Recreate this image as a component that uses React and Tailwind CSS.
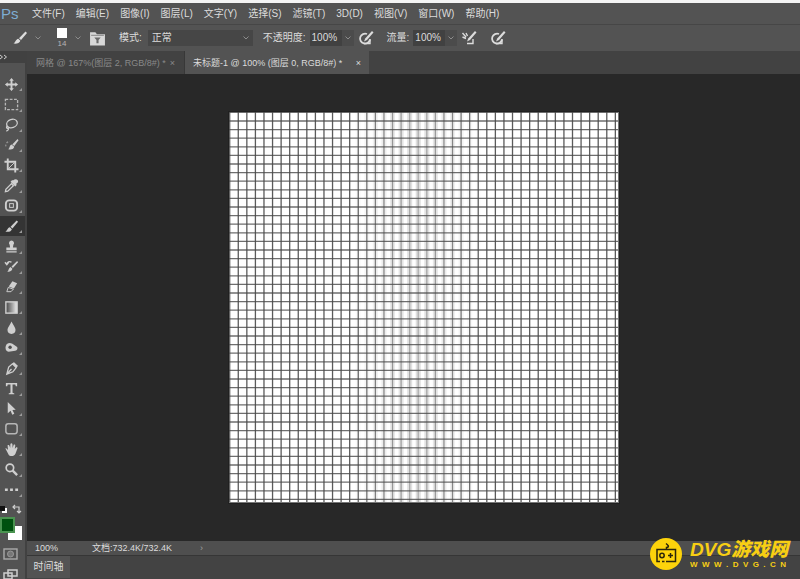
import React from 'react';

const MENUS = ['文件(F)', '编辑(E)', '图像(I)', '图层(L)', '文字(Y)', '选择(S)', '滤镜(T)', '3D(D)', '视图(V)', '窗口(W)', '帮助(H)'];

const line = { fill: 'none', stroke: 'currentColor', strokeWidth: 1.4 };

const brush = (
  <>
    <path d="M13.5 1.5 L15 3 L9 10 L7 8.2 Z" fill="currentColor" />
    <path d="M6.3 8.8 L8.4 10.8 C7.5 13.5 4.5 14 1.5 13.6 C3.5 12.6 3.5 9.5 6.3 8.8 Z" fill="currentColor" />
  </>
);

const TOOLS = [
  ['移动工具', <path d="M8 1 L10.5 4 H9 V7 H12 V5.5 L15 8 L12 10.5 V9 H9 V12 H10.5 L8 15 L5.5 12 H7 V9 H4 V10.5 L1 8 L4 5.5 V7 H7 V4 H5.5 Z" fill="currentColor" />],
  ['矩形选框工具', <rect x="1.5" y="2.5" width="13" height="11" {...line} strokeDasharray="3 1.6" opacity="0.8" />],
  ['套索工具', <><ellipse cx="8.5" cy="7" rx="5.8" ry="4.4" transform="rotate(-20 8.5 7)" {...line} /><path d="M4 10 C2 10 2.5 12.5 4.5 12 C5.5 13 4 14.5 2.5 15" {...line} /></>],
  ['快速选择工具', <><path d="M14.5 2 L15.5 3.5 L11 9.5 L8.8 8 Z" fill="currentColor" /><path d="M8 8 L11 10.5 C10 14 6.5 13.5 4.5 13 C6.5 12 5.5 9 8 8 Z" fill="currentColor" /><path d="M2 10 A4 4 0 0 1 6 5" {...line} strokeDasharray="2 1.5" opacity="0.5" /></>],
  ['裁剪工具', <><path d="M4 0.5 V12 H15.5 M0.5 4 H12 V15.5" {...line} strokeWidth="2" /><path d="M5 11 L11 5" {...line} strokeWidth="1" /></>],
  ['吸管工具', <><path d="M10 2.5 C12 0 15.5 1.5 15 4 C14.8 5 13.5 5.8 13 6.2 L13.5 7.5 L12 9 L7 4 L8.5 2.5 Z" fill="currentColor" /><path d="M8 6 L10 8.2 L4 14 L1.5 14.5 L2 12 Z" {...line} /></>],
  ['修补工具', <><rect x="2" y="2.5" width="12" height="11" rx="3.5" {...line} strokeWidth="2" /><rect x="6" y="6" width="4" height="4" {...line} strokeWidth="1" /></>],
  ['画笔工具', brush],
  ['仿制图章工具', <path d="M8 1.5 A2.7 2.7 0 0 1 10 6 L9.5 9 H13.5 V12 H2.5 V9 H6.5 L6 6 A2.7 2.7 0 0 1 8 1.5 Z M2.5 13 H13.5 V14.4 H2.5 Z" fill="currentColor" />],
  ['历史记录画笔工具', <><path d="M14 2 L15 3.4 L9.5 9.5 L8 8 Z M7 8.5 L9 10.5 C8 13.6 5.5 14 3.5 13.5 C5.2 12.5 4.8 9.5 7 8.5 Z" fill="currentColor" /><path d="M1 3.5 L3 6 L5 3.5 M3 6 C3 3 6 2 8 3.5" {...line} /></>],
  ['橡皮擦工具', <><path d="M9 2.5 L14 4.5 L10.5 10 L5 8 Z" fill="currentColor" /><path d="M4.5 9 L10 10.8 L7.5 13.5 H3 Z" {...line} strokeWidth="1" /></>],
  ['渐变工具', (
    <>
      <linearGradient id="tool-gradient"><stop offset="0" stopColor="#444" /><stop offset="1" stopColor="#eee" /></linearGradient>
      <rect x="2" y="2" width="12" height="12" fill="url(#tool-gradient)" stroke="currentColor" strokeWidth="1.5" />
    </>
  )],
  ['模糊工具', <path d="M8 1.5 C9.5 5 12.3 7.5 12.3 10.5 A4.3 4.3 0 0 1 3.7 10.5 C3.7 7.5 6.8 5 8 1.5 Z" fill="currentColor" />],
  ['减淡工具', <><path d="M2 6 C3 3 6 2.5 9 4 L14 7.5 C15 9 14 11 12 11.5 L5 12.5 C2 12 1 9 2 6 Z" fill="currentColor" /><circle cx="6.5" cy="7.7" r="1.8" fill="#4d4d4d" /></>],
  ['钢笔工具', <><path d="M9 3 L13 7 L9.5 11.5 L3 14 L5 6.5 Z M3 14 L8 8.5" {...line} /><path d="M10.5 1 L15 5.3 L13 7 L9 3 Z" fill="currentColor" /></>],
  ['文字工具', <path d="M2 2 H14 V5.5 H12.6 L12 3.8 H9.1 V12.6 L11 13.2 V14.2 H5 V13.2 L6.9 12.6 V3.8 H4 L3.4 5.5 H2 Z" fill="currentColor" />],
  ['路径选择工具', <path d="M4 1 L12.5 9.2 L9 9.6 L11 13.6 L8.8 14.6 L7 10.5 L4 13 Z" fill="currentColor" />],
  ['矩形工具', <rect x="2" y="3" width="12" height="10.5" rx="2.5" {...line} strokeWidth="1.6" opacity="0.8" />],
  ['抓手工具', <path d="M1.5 6.8 C2.5 6 3.6 7.5 4.3 8.6 L3.8 3.7 C4.5 2.7 5.7 3.2 5.9 4.3 L6.6 6.5 L6.8 2 C7.5 1 8.8 1.3 9 2.4 L9.2 6.4 L10.3 3 C11.2 2.3 12.2 3 12 4 L11.5 7.4 L13 5.6 C14 5.3 14.8 6 14.3 7 L12.2 12.5 C11 15.5 6 15.7 4.8 13.3 Z" fill="currentColor" />],
  ['缩放工具', <><circle cx="6.3" cy="6.2" r="4" {...line} strokeWidth="1.8" /><path d="M9.3 9.2 L14 14" {...line} strokeWidth="2.5" /></>],
  ['编辑工具栏', <path d="M1 7 H4 V9.5 H1 Z M6.5 7 H9.5 V9.5 H6.5 Z M12 7 H15 V9.5 H12 Z" fill="currentColor" />],
];

function Icon({ children, className = 'size-4' }) {
  return <svg viewBox="0 0 16 16" className={className} aria-hidden="true">{children}</svg>;
}

function Caret() {
  return (
    <svg viewBox="0 0 6 6" className="size-[6px] shrink-0 text-[#8c8c8c]" aria-hidden="true">
      <path d="M0.5 1.5 L3 4 L5.5 1.5" fill="none" stroke="currentColor" />
    </svg>
  );
}

function PressureIcon({ airbrush }) {
  return (
    <Icon>
      {airbrush
        ? <path d="M1.5 3 L5 7 M1.5 7 L5 8.5 M5 3 L6.5 6" {...line} />
        : <path d="M9 4 A5 5 0 1 0 12 9.5" {...line} strokeWidth="1.8" />}
      <path d="M14 1 L15.5 2.5 L9 10 L6 11.5 L7.2 8.5 Z" fill="currentColor" />
      <path d="M6 13.5 H12 L12 9" {...line} />
    </Icon>
  );
}

function MenuBar() {
  return (
    <header className="flex h-[22px] items-center border-b border-[#464646] bg-[#535353]">
      <span className="w-8 pl-px font-[Liberation_Sans] text-[15px] leading-5 text-[#7eadd3]">Ps</span>
      <nav className="flex gap-[11px]">
        {MENUS.map((m) => <button key={m} type="button" className="whitespace-nowrap">{m}</button>)}
      </nav>
    </header>
  );
}

function Percent({ label }) {
  return (
    <label className="flex items-center gap-1">
      {label}
      <span className="flex h-4 items-center">
        <input type="text" defaultValue="100%" className="h-4 w-8 bg-[#414141] px-[2px] outline-none" />
        <span className="flex h-4 w-3 items-center justify-center bg-[#4b4b4b]"><Caret /></span>
      </span>
    </label>
  );
}

function OptionsBar() {
  return (
    <div className="flex h-[26px] items-center bg-[#535353] pl-3 whitespace-nowrap">
      <button type="button" aria-label="画笔" className="flex items-center gap-[7px]"><Icon>{brush}</Icon><Caret /></button>
      <button type="button" className="ml-4 flex items-center gap-2">
        <span className="flex flex-col items-center">
          <span className="size-[10px] bg-white" />
          <span className="text-[8px] leading-[11px] text-[#b5b5b5]">14</span>
        </span>
        <Caret />
      </button>
      <button type="button" aria-label="画笔面板" className="ml-2">
        <Icon className="size-[17px]">
          <path d="M1 2 H6 L7.5 4 H15 V14.5 H1 Z" fill="#d8d8d8" />
          <path d="M5 7 H11 L9 9.5 V12.5 H7 V9.5 Z" fill="#6a6a6a" />
          <path d="M2 5 H14" stroke="#8a8a8a" />
        </Icon>
      </button>
      <label className="ml-[13px] flex items-center gap-[6px]">
        模式:
        <span className="flex h-4 w-[105px] items-center bg-[#464646] pr-1">
          <select defaultValue="正常" className="h-4 w-full appearance-none bg-transparent px-1 outline-none"><option>正常</option></select>
          <Caret />
        </span>
      </label>
      <div className="ml-[10px]"><Percent label="不透明度:" /></div>
      <button type="button" aria-label="不透明度压力" className="ml-1"><PressureIcon /></button>
      <div className="ml-[13px]"><Percent label="流量:" /></div>
      <button type="button" aria-label="喷枪" className="ml-1"><PressureIcon airbrush /></button>
      <button type="button" aria-label="大小压力" className="ml-[13px]"><PressureIcon /></button>
    </div>
  );
}

function Toolbar() {
  return (
    <aside className="flex w-[27px] shrink-0 flex-col border-r-2 border-[#414141] bg-[#535353] text-[#cfcfcf]">
      <div className="flex h-3 items-center bg-[#414141]">
        <svg viewBox="0 0 8 6" className="h-[6px] w-2" aria-hidden="true"><path d="M0 1 L2.5 3 L0 5 M4 1 L6.5 3 L4 5" fill="none" stroke="currentColor" /></svg>
      </div>
      <div className="mt-[11px] flex h-[426px] flex-col">
        {TOOLS.map(([name, art]) => (
          <button
            key={name}
            type="button"
            aria-label={name}
            className={name === '画笔工具' ? 'flex flex-1 items-center bg-[#343434] pl-1' : 'flex flex-1 items-center pl-1'}
          >
            <Icon className="size-[15px]">{art}</Icon>
            <svg viewBox="0 0 3 3" className="mb-[3px] size-[3px] self-end text-[#9a9a9a]" aria-hidden="true"><path d="M3 0 V3 H0 Z" fill="currentColor" /></svg>
          </button>
        ))}
      </div>
      <svg viewBox="0 0 25 79" className="h-[79px] w-[25px]" aria-hidden="true">
        <rect x="2" y="8" width="5" height="5" fill="#fff" />
        <rect x="0" y="6" width="5" height="5" fill="#111" />
        <path d="M13 7 H19 V13 M15 5 L13 7 L15 9 M17 11 L19 13 L21 11" {...line} strokeWidth="1.2" />
        <rect x="8" y="26" width="14" height="14" fill="#fff" />
        <rect x="1" y="18" width="13" height="14" fill="#00510f" stroke="#4a9350" strokeWidth="2" />
        <rect x="4" y="49" width="13" height="10" {...line} stroke="#aaa" />
        <circle cx="10.5" cy="54" r="3" fill="#777" stroke="#999" />
        <path d="M8 70 H17 V76 H8 Z M4 73 H12 V79 H4 Z" fill="#535353" stroke="currentColor" strokeWidth="1.5" />
      </svg>
    </aside>
  );
}

function Tabs() {
  return (
    <div role="tablist" className="flex h-[23px] shrink-0 bg-[#424242] text-[9px] whitespace-nowrap">
      <div role="tab" aria-selected="false" className="flex w-[158px] items-center justify-between border-r border-[#383838] px-[9px] text-[#898989]">
        网格 @ 167%(图层 2, RGB/8#) *
        <button type="button" aria-label="关闭">×</button>
      </div>
      <div role="tab" aria-selected="true" className="flex w-[184px] items-center justify-between bg-[#535353] px-2">
        未标题-1 @ 100% (图层 0, RGB/8#) *
        <button type="button" aria-label="关闭">×</button>
      </div>
    </div>
  );
}

const GRID = Array.from({ length: 46 }, (_, i) => i);

function Artboard() {
  return (
    <svg viewBox="0 0 390 391" className="h-[391px] w-[390px]" role="img" aria-label="网格">
      <rect width="390" height="391" fill="#fff" />
      {GRID.map((i) => {
        const x = i * 8.57 + 0.7;
        const soft = Math.max(0, 1 - Math.abs(x - 187) / 65);
        return (
          <g key={i} stroke="#4a4a4a">
            {soft > 0 && <path d={`M${x} 0 V391`} strokeWidth="5" opacity={soft * 0.18} />}
            <path d={`M${x} 0 V391`} strokeWidth="1.3" opacity={0.9 - soft * 0.6} />
            <path d={`M0 ${i * 8.6 + 0.4} H390`} strokeWidth="1.3" opacity="0.8" />
          </g>
        );
      })}
      <path d="M389.5 0 V391 M0 390.5 H390" stroke="#777" />
    </svg>
  );
}

function Watermark() {
  return (
    <div className="absolute right-[10px] bottom-[9px] flex items-center gap-2 text-[#f8cf13]">
      <svg viewBox="0 0 32 32" className="size-8" aria-hidden="true">
        <circle cx="16" cy="16" r="16" fill="#fdd30b" />
        <g fill="none" stroke="#2b260b" strokeWidth="1.5">
          <path d="M10 23.5 H7 V11.5 H25.5 V23.5 H16 M12 23.5 H14.5 M16.5 11 V9.5 C20 9 18 7 16 5.5" />
          <circle cx="12" cy="17.5" r="2.2" />
          <path d="M20.5 15 V20 M18 17.5 H23" />
        </g>
      </svg>
      <div className="flex w-[100px] flex-col whitespace-nowrap">
        <span className="text-[19px] leading-[22px] font-black italic">DVG游戏网</span>
        <span className="font-[Liberation_Sans] text-[8px] leading-2 font-bold whitespace-pre">W  W  W  .  D  V  G  .  C  N</span>
      </div>
    </div>
  );
}

export default function App() {
  return (
    <div className="relative flex min-h-screen flex-col bg-[#535353] font-['Liberation_Sans','Noto_Sans_CJK_SC',sans-serif] text-[10px] leading-4 text-[#dcdcdc]">
      <div className="h-[3px] bg-[#f4f4f4]" />
      <MenuBar />
      <OptionsBar />
      <div className="flex flex-1">
        <Toolbar />
        <div className="flex min-w-0 flex-1 flex-col">
          <Tabs />
          <main className="flex flex-1 items-center justify-center bg-[#282828] pl-5">
            <div className="border border-[#202020]"><Artboard /></div>
          </main>
          <footer className="bg-[#434343]">
            <div className="flex h-[14px] items-center bg-[#4f4f4f] pl-2 text-[9px]">
              <span className="w-[57px]">100%</span>
              <span className="w-[108px]">文档:732.4K/732.4K</span>
              <button type="button" aria-label="更多" className="text-[#a0a0a0]">›</button>
            </div>
            <div className="flex h-6 border-t border-[#363636]">
              <button type="button" className="h-[22px] w-[43px] bg-[#535353]">时间轴</button>
            </div>
          </footer>
        </div>
      </div>
      <Watermark />
    </div>
  );
}
